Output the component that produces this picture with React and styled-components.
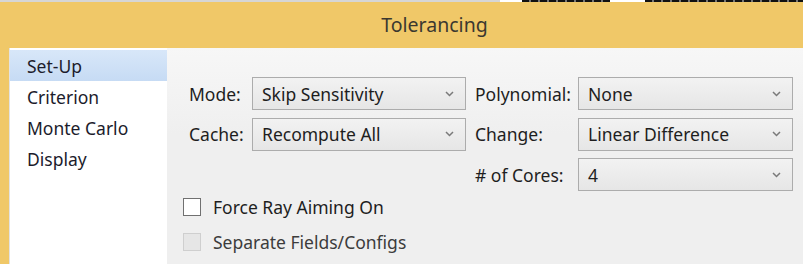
import styled, { createGlobalStyle } from 'styled-components';

const GlobalStyle = createGlobalStyle`
    html, body {
        margin: 0;
        padding: 0;
        width: 803px;
        height: 264px;
        overflow: hidden;
    }
    * {
        box-sizing: border-box;
    }
`;

const navItems = ['Set-Up', 'Criterion', 'Monte Carlo', 'Display'];

function Chevron() {
    return (
        <svg width="9" height="6" viewBox="0 0 9 6">
            <path d="M1 1 L4.5 4.5 L8 1" fill="none" stroke="#7a7a7a" strokeWidth="1.5" />
        </svg>
    );
}

function Dropdown({ value }) {
    return (
        <Select>
            <span>{value}</span>
            <Chevron />
        </Select>
    );
}

function Check({ label, disabled }) {
    return (
        <CheckRow>
            <Box disabled={disabled} />
            <CheckText disabled={disabled}>{label}</CheckText>
        </CheckRow>
    );
}

function App() {
    return (
        <>
            <GlobalStyle />
            <Window>
                <TopStrip>
                    <StripSeg w="500px" bg="#d6d6d6" />
                    <StripSeg w="22px" bg="#ffffff" />
                    <StripSeg w="88px" dashed />
                    <StripSeg w="35px" bg="#ffffff" />
                    <StripSeg w="158px" dashed />
                </TopStrip>
                <Header>Tolerancing</Header>
                <Body>
                    <Sidebar>
                        {navItems.map((item, i) => (
                            <NavItem key={item} active={i === 0}>{item}</NavItem>
                        ))}
                    </Sidebar>
                    <Panel>
                        <Form>
                            <Label>Mode:</Label>
                            <Dropdown value="Skip Sensitivity" />
                            <Label right>Polynomial:</Label>
                            <Dropdown value="None" />

                            <Label>Cache:</Label>
                            <Dropdown value="Recompute All" />
                            <Label right>Change:</Label>
                            <Dropdown value="Linear Difference" />

                            <span />
                            <span />
                            <Label right># of Cores:</Label>
                            <Dropdown value="4" />
                        </Form>
                        <Checks>
                            <Check label="Force Ray Aiming On" />
                            <Check label="Separate Fields/Configs" disabled />
                        </Checks>
                    </Panel>
                </Body>
            </Window>
        </>
    );
}

export default App;

const Window = styled.div`
    width: 803px;
    height: 264px;
    display: flex;
    flex-direction: column;
    background-color: #f0c868;
    font-family: "Noto Sans", "Open Sans", sans-serif;
`;

const TopStrip = styled.div`
    height: 2px;
    display: flex;
`;

const StripSeg = styled.div`
    width: ${p => p.w};
    height: 100%;
    background: ${p => p.dashed
        ? 'repeating-linear-gradient(90deg, #111 0 7px, #777 7px 9px)'
        : p.bg};
`;

const Header = styled.div`
    height: 46px;
    display: flex;
    align-items: center;
    justify-content: center;
    padding: 0 0 2px 66px;
    font-size: 19.5px;
    color: #3b3830;
`;

const Body = styled.div`
    flex: 1;
    display: flex;
    padding-left: 9px;
    min-height: 0;
`;

const Sidebar = styled.div`
    width: 158px;
    background-color: #ffffff;
    border-left: 1px solid #e2e2e2;
    padding-top: 2px;
`;

const NavItem = styled.div`
    height: 31px;
    display: flex;
    align-items: center;
    padding-left: 17px;
    font-size: 17.5px;
    color: #1c1c2c;
    background: ${p => p.active ? 'linear-gradient(#d8e7f9, #c6dbf4)' : 'transparent'};
`;

const Panel = styled.div`
    flex: 1;
    background: linear-gradient(#f7f7f7, #efefef 40%);
    padding: 29px 0 0 16px;
`;

const Form = styled.div`
    display: grid;
    grid-template-columns: 63px 214px 112px 215px;
    grid-auto-rows: 33px;
    row-gap: 7.5px;
    margin-left: 6px;
    align-items: center;
`;

const Label = styled.div`
    font-size: 17.5px;
    color: #1e1e1e;
    white-space: nowrap;
    padding-left: ${p => p.right ? '9px' : '0'};
`;

const Select = styled.div`
    height: 33px;
    display: flex;
    align-items: center;
    justify-content: space-between;
    padding: 0 11px 0 9px;
    border: 1px solid #acacac;
    background: linear-gradient(#f2f2f2, #e6e6e6);
    font-size: 17.5px;
    color: #1e1e1e;
`;

const Checks = styled.div`
    display: flex;
    flex-direction: column;
    gap: 9px;
    margin-top: 3px;
`;

const CheckRow = styled.div`
    height: 26px;
    display: flex;
    align-items: center;
    gap: 12px;
`;

const Box = styled.div`
    width: 18px;
    height: 18px;
    border: 1px solid ${p => p.disabled ? '#cfcfcf' : '#707070'};
    background-color: ${p => p.disabled ? '#e6e6e6' : '#ffffff'};
`;

const CheckText = styled.span`
    font-size: 17.5px;
    color: ${p => p.disabled ? '#3c3c3c' : '#1e1e1e'};
`;
